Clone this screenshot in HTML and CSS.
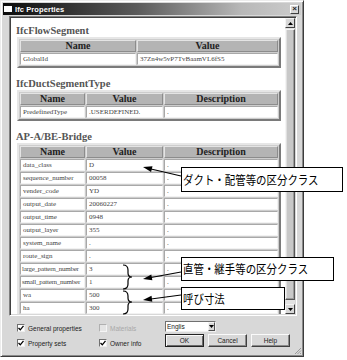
FILE: index.html
```html
<!DOCTYPE html>
<html lang="ja">
<head>
  <meta charset="UTF-8" />
  <meta name="viewport" content="width=device-width, initial-scale=1" />
  <title>Ifc Properties</title>
  <link rel="stylesheet" href="styles.css">
</head>
<body>

  <div class="window">
    <div class="titlebar">
      <span class="appicon"></span>
      <span class="title">Ifc Properties</span>
      <span class="close">×</span>
    </div>

    <div class="client">
      <!-- プロパティ一覧 -->
      <div class="panel">
        <div class="content">
          <h2>IfcFlowSegment</h2>
          <table class="props two">
            <colgroup><col class="c-name"><col class="c-value"></colgroup>
            <tr><th>Name</th><th>Value</th></tr>
            <tr><td>GlobalId</td><td>37Zn4w5vP7TvBaamVL6fS5</td></tr>
          </table>

          <h2>IfcDuctSegmentType</h2>
          <table class="props three">
            <colgroup><col class="c-name"><col class="c-value"><col class="c-desc"></colgroup>
            <tr><th>Name</th><th>Value</th><th>Description</th></tr>
            <tr><td>PredefinedType</td><td>.USERDEFINED.</td><td>.</td></tr>
          </table>

          <h2>AP-A/BE-Bridge</h2>
          <table class="props three">
            <colgroup><col class="c-name"><col class="c-value"><col class="c-desc"></colgroup>
            <tr><th>Name</th><th>Value</th><th>Description</th></tr>
            <tr><td>data_class</td><td>D</td><td>.</td></tr>
            <tr><td>sequence_number</td><td>00058</td><td>.</td></tr>
            <tr><td>vender_code</td><td>YD</td><td>.</td></tr>
            <tr><td>output_date</td><td>20060227</td><td>.</td></tr>
            <tr><td>output_time</td><td>0948</td><td>.</td></tr>
            <tr><td>output_layer</td><td>355</td><td>.</td></tr>
            <tr><td>system_name</td><td>.</td><td>.</td></tr>
            <tr><td>route_sign</td><td>.</td><td>.</td></tr>
            <tr><td class="tight">large_pattern_number</td><td>3</td><td>.</td></tr>
            <tr><td class="tight">small_pattern_number</td><td>1</td><td>.</td></tr>
            <tr><td>wa</td><td>500</td><td>.</td></tr>
            <tr><td>ha</td><td>300</td><td>.</td></tr>
          </table>
        </div>

        <div class="scrollbar">
          <div class="sbtn">
            <svg width="5" height="3" viewBox="0 0 5 3"><polygon points="2.5,0 5,3 0,3" fill="#000"/></svg>
          </div>
          <div class="thumb"></div>
          <div class="sbtn">
            <svg width="5" height="3" viewBox="0 0 5 3"><polygon points="0,0 5,0 2.5,3" fill="#000"/></svg>
          </div>
        </div>
      </div>

      <!-- 下部のオプション -->
      <div class="controls">
        <div class="checks">
          <label class="check"><span class="box"><svg width="6" height="6" viewBox="0 0 6 6"><polyline points="0.5,3 2.3,4.8 5.5,0.8" fill="none" stroke="#000" stroke-width="1.3"/></svg></span>General properties</label>
          <label class="check off"><span class="box"></span>Materials</label>
          <label class="check"><span class="box"><svg width="6" height="6" viewBox="0 0 6 6"><polyline points="0.5,3 2.3,4.8 5.5,0.8" fill="none" stroke="#000" stroke-width="1.3"/></svg></span>Property sets</label>
          <label class="check"><span class="box"><svg width="6" height="6" viewBox="0 0 6 6"><polyline points="0.5,3 2.3,4.8 5.5,0.8" fill="none" stroke="#000" stroke-width="1.3"/></svg></span>Owner info</label>
        </div>

        <div class="actions">
          <div class="select">
            <span class="select-text">Englis</span>
            <span class="select-btn"><svg width="5" height="3" viewBox="0 0 5 3"><polygon points="0,0 5,0 2.5,3" fill="#000"/></svg></span>
          </div>
          <div class="buttons">
            <button class="default">OK</button>
            <button>Cancel</button>
            <button>Help</button>
          </div>
        </div>
      </div>
    </div>

    <svg class="grip" width="8" height="8" viewBox="0 0 8 8">
      <path d="M7,1 L1,7 M7,3.5 L3.5,7 M7,6 L6,7" stroke="#888" stroke-width="0.8"/>
    </svg>
  </div>

  <!-- 注記 -->
  <div class="callout note1"><span>ダクト・配管等の区分クラス</span></div>
  <div class="callout note2"><span>直管・継手等の区分クラス</span></div>
  <div class="callout note3"><span>呼び寸法</span></div>

  <svg class="marks" width="347" height="360" viewBox="0 0 347 360">
    <g stroke="#000" stroke-width="1.2" fill="none">
      <line x1="181" y1="176" x2="151" y2="169" />
      <line x1="181" y1="272" x2="151" y2="277.5" />
      <line x1="181" y1="295" x2="151" y2="299" />
      <path d="M123,265 Q128,265 128,270 L128,273 Q128,277 132,277 Q128,277 128,281 L128,284 Q128,289 123,289" />
      <path d="M123,291 Q128,291 128,296 L128,298 Q128,302 132,302 Q128,302 128,306 L128,309 Q128,314 123,314" />
    </g>
    <g fill="#000">
      <polygon points="143,167 151.1,172.0 152.5,166.2" />
      <polygon points="143,279 152.4,280.3 151.3,274.4" />
      <polygon points="143,300 152.3,301.8 151.5,295.8" />
    </g>
  </svg>

</body>
</html>
```

FILE: styles.css
```css
body {
  margin: 0;
  width: 347px;
  height: 360px;
  background: #fff;
  font-family: 'Liberation Sans', Arial, sans-serif;
  position: relative;
  overflow: hidden;
}

.window {
  position: relative;
  width: 304px;
  height: 357px;
  box-sizing: border-box;
  background: #d8d8d8;
  border: 1px solid;
  border-color: #ececec #3c3c3c #3c3c3c #ececec;
  box-shadow: inset 1px 1px #fff, inset -1px -1px #8a8a8a;
  padding: 2px;
  display: flex;
  flex-direction: column;
}

.titlebar {
  height: 12px;
  display: flex;
  align-items: center;
  padding: 0 2px 0 1px;
  background: linear-gradient(to right, #0c0c0c, #5a5a5a 45%, #b8b8b8 80%, #cccccc);
}

.appicon {
  width: 8px;
  height: 6px;
  background: #fff;
  margin-right: 3px;
}

.title {
  color: #fff;
  font-weight: bold;
  font-size: 7.5px;
  letter-spacing: 0.1px;
}

.close {
  margin-left: auto;
  width: 7px;
  height: 7px;
  background: #d8d8d8;
  border: 1px solid;
  border-color: #fff #404040 #404040 #fff;
  font-size: 8px;
  line-height: 6px;
  text-align: center;
  font-weight: bold;
  color: #222;
}

.client {
  flex: 1;
  padding: 1px 4px 0 6px;
  display: flex;
  flex-direction: column;
}

.panel {
  height: 300px;
  box-sizing: border-box;
  display: flex;
  background: #fff;
  border: 1px solid;
  border-color: #808080 #fff #fff #808080;
  box-shadow: inset 1px 1px #404040, inset -1px -1px #d8d8d8;
  padding: 1px;
}

.content {
  flex: 1;
  min-width: 0;
  padding: 7px 0 0 6px;
  overflow: hidden;
}

h2 {
  margin: 0 0 0 -1px;
  height: 12px;
  font: bold 10.5px/12px 'Liberation Serif', 'Times New Roman', serif;
  color: #555;
  white-space: nowrap;
}

.props {
  width: 264px;
  table-layout: fixed;
  border-collapse: separate;
  border-spacing: 1px;
  background: #cdcdcd;
  border: 2px solid;
  border-color: #e6e6e6 #7a7a7a #7a7a7a #e6e6e6;
  margin-bottom: 10px;
}

.two .c-name { width: 116px; }
.two .c-value { width: 141px; }
.three .c-name { width: 65px; }
.three .c-value { width: 77px; }
.three .c-desc { width: 114px; }

.props th {
  height: 10px;
  padding: 0;
  background: #b4b4b4;
  border: 1px solid;
  border-color: #e4e4e4 #8c8c8c #8c8c8c #e4e4e4;
  font: bold 10px/10px 'Liberation Serif', 'Times New Roman', serif;
  color: #222;
  text-align: center;
}

.props td {
  height: 10px;
  padding: 0 0 0 2px;
  background: #fff;
  border: 1px solid;
  border-color: #a8a8a8 #f2f2f2 #f2f2f2 #a8a8a8;
  font: 7px/10px 'Liberation Serif', 'Times New Roman', serif;
  color: #444;
  white-space: nowrap;
  overflow: hidden;
}

.props td.tight {
  padding-left: 1px;
  letter-spacing: -0.25px;
}

.scrollbar {
  flex: none;
  width: 10px;
  display: flex;
  flex-direction: column;
  background: #e2e2e2;
}

.sbtn {
  height: 8px;
  background: #d8d8d8;
  border: 1px solid;
  border-color: #f4f4f4 #404040 #404040 #f4f4f4;
  display: flex;
  align-items: center;
  justify-content: center;
}

.thumb {
  flex: 1;
  margin: 1px 0 4px;
  background: #c8c8c8;
  border: 1px solid;
  border-color: #f4f4f4 #555 #555 #f4f4f4;
  box-shadow: inset -1px -1px #9a9a9a, inset 1px 0 #e0e0e0;
}

.controls {
  display: flex;
  padding: 5px 0 0 8px;
}

.checks {
  display: grid;
  grid-template-columns: 82px 66px;
  row-gap: 7px;
  padding-top: 3px;
  align-content: start;
}

.check {
  display: flex;
  align-items: center;
  height: 8px;
  font-size: 6.5px;
  color: #222;
  white-space: nowrap;
}

.check.off {
  color: #a8a8a8;
}

.box {
  width: 6px;
  height: 6px;
  margin-right: 3px;
  background: #fff;
  border: 1px solid;
  border-color: #707070 #eee #eee #707070;
  display: flex;
  align-items: center;
  justify-content: center;
}

.check.off .box {
  background: #e4e4e4;
  border-color: #b0b0b0 #f4f4f4 #f4f4f4 #b0b0b0;
}

.actions {
  display: flex;
  flex-direction: column;
  gap: 2px;
}

.select {
  width: 51px;
  height: 11px;
  box-sizing: border-box;
  display: flex;
  background: #fff;
  border: 1px solid;
  border-color: #707070 #f0f0f0 #f0f0f0 #707070;
}

.select-text {
  flex: 1;
  font-size: 6.5px;
  line-height: 9px;
  padding-left: 1px;
  color: #222;
}

.select-btn {
  width: 7px;
  background: #d8d8d8;
  border: 1px solid;
  border-color: #f4f4f4 #505050 #505050 #f4f4f4;
  box-sizing: border-box;
  display: flex;
  align-items: center;
  justify-content: center;
}

.buttons {
  display: flex;
  gap: 4px;
}

button {
  width: 39px;
  height: 13px;
  padding: 0;
  background: #d8d8d8;
  border: 1px solid;
  border-color: #fafafa #404040 #404040 #fafafa;
  box-shadow: inset -1px -1px #8a8a8a;
  font-family: 'Liberation Sans', Arial, sans-serif;
  font-size: 6.5px;
  color: #222;
}

button.default {
  border-color: #222;
  box-shadow: inset 1px 1px #fafafa, inset -1px -1px #6a6a6a;
}

.grip {
  position: absolute;
  right: 1px;
  bottom: 1px;
}

.callout {
  position: absolute;
  box-sizing: border-box;
  background: #fff;
  border: 1px solid #000;
  display: flex;
  align-items: center;
  padding-left: 1px;
  font: 12px/1 'Noto Sans CJK JP', sans-serif;
  color: #000;
  white-space: nowrap;
  z-index: 3;
}

.callout span {
  display: inline-block;
  transform: scaleX(0.87);
  transform-origin: left center;
}

.note1 { left: 181px; top: 167px; width: 162px; height: 25px; }
.note2 { left: 181px; top: 257px; width: 153px; height: 24px; }
.note3 { left: 181px; top: 287px; width: 104px; height: 23px; }

.marks {
  position: absolute;
  left: 0;
  top: 0;
  z-index: 2;
}
```
